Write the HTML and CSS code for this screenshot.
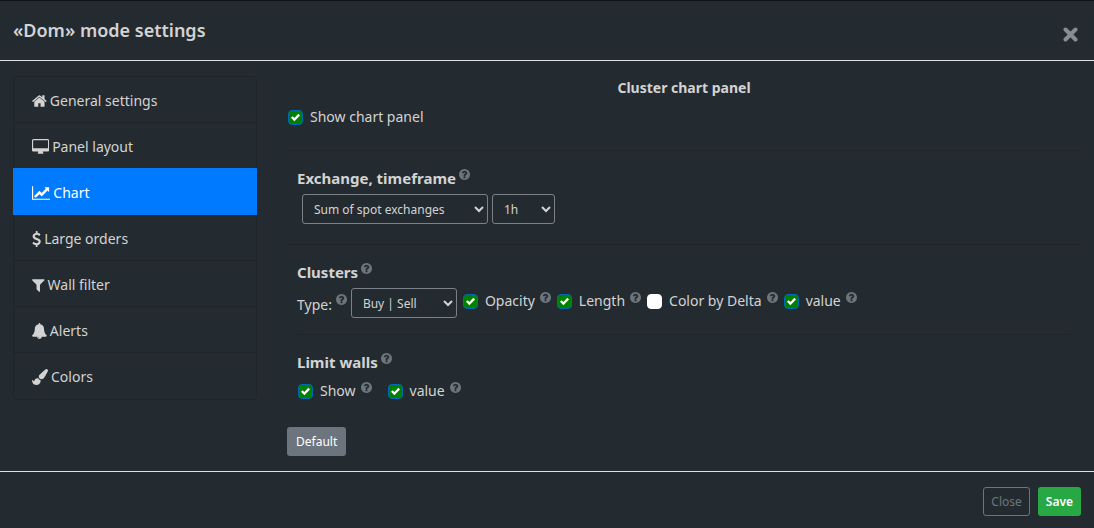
FILE: index.html
```html
<!DOCTYPE html>
<html lang="en">
  <head>
    <meta charset="UTF-8" />
    <meta name="viewport" content="width=device-width, initial-scale=1.0" />
    <title>«Dom» mode settings</title>
    <link rel="stylesheet" href="styles.css">
  </head>
  <body>
    <svg class="sprite" aria-hidden="true">
      <symbol id="icon-help" viewBox="128 128 1536 1536">
        <path d="M1024 1376v-192q0-14-9-23t-23-9h-192q-14 0-23 9t-9 23v192q0 14 9 23t23 9h192q14 0 23-9t9-23zm256-672q0-88-55.500-163t-138.500-116-170-41q-243 0-371 213-15 24 8 42l132 100q7 6 19 6 16 0 25-12 53-68 86-92 34-24 86-24 48 0 85.500 26t37.500 59q0 38-20 61t-68 45q-63 28-115.500 86.500t-52.500 125.500v36q0 14 9 23t23 9h192q14 0 23-9t9-23q0-19 21.500-49.500t54.500-49.500q32-18 49-28.500t46-35 44.500-48 28-60.500 12.500-81zm384 192q0 209-103 385.500t-279.500 279.500-385.500 103-385.500-103-279.500-279.500-103-385.500 103-385.500 279.500-279.500 385.500-103 385.500 103 279.500 279.500 103 385.500z"/>
      </symbol>
    </svg>

    <div class="modal">
      <header class="modal-header">
        <h1>«Dom» mode settings</h1>
        <button type="button" class="close-btn" aria-label="Close dialog">
          <svg viewBox="0 0 15 15"><path d="M2.500 2.500l10 10M12.500 2.500l-10 10"/></svg>
        </button>
      </header>

      <div class="modal-body">
        <nav class="menu">
          <a href="#general">
            <svg viewBox="64 0 1664 1792"><path d="M1472 992v480q0 26-19 45t-45 19h-384v-384h-256v384h-384q-26 0-45-19t-19-45v-480q0-1 .5-3t.5-3l575-474 575 474q1 2 1 6zm223-69l-62 74q-8 9-21 11h-3q-13 0-21-7l-692-577-692 577q-12 8-24 7-13-2-21-11l-62-74q-8-10-7-23.500t11-21.500l719-599q32-26 76-26t76 26l244 204v-195q0-14 9-23t23-9h192q14 0 23 9t9 23v408l219 182q10 8 11 21.500t-7 23.500z"/></svg>
            General settings
          </a>
          <a href="#layout">
            <svg viewBox="-64 0 1920 1792"><path d="M1728 992v-832q0-13-9.500-22.500t-22.500-9.500h-1600q-13 0-22.500 9.500t-9.500 22.500v832q0 13 9.500 22.500t22.500 9.500h1600q13 0 22.500-9.500t9.500-22.500zm128-832v1088q0 66-47 113t-113 47h-544q0 37 16 77.500t32 71 16 43.500q0 26-19 45t-45 19h-512q-26 0-45-19t-19-45q0-14 16-44t32-70 16-78h-544q-66 0-113-47t-47-113v-1088q0-66 47-113t113-47h1600q66 0 113 47t47 113z"/></svg>
            Panel layout
          </a>
          <a href="#chart" class="active">
            <svg viewBox="-128 0 2048 1792"><path d="M1920 1536v128h-2048v-1536h128v1408h1920zm-128-1248v435q0 21-19.500 29.500t-35.500-7.500l-121-121-633 633q-10 10-23 10t-23-10l-233-233-416 416-192-192 585-585q10-10 23-10t23 10l233 233 464-464-121-121q-16-16-7.500-35.500t29.500-19.500h435q14 0 23 9t9 23z"/></svg>
            Chart
          </a>
          <a href="#orders">
            <svg viewBox="384 0 1024 1792"><path d="M1362 1185q0 153-99.500 263.500t-258.500 136.500v175q0 14-9 23t-23 9h-135q-13 0-22.500-9.500t-9.500-22.500v-175q-66-9-127.500-31t-101.500-44.500-74-48-46.500-37.500-17.500-18q-17-21-2-41l103-135q7-10 23-12 15-2 24 9l2 2q113 99 243 125 37 8 74 8 81 0 142.500-43t61.500-122q0-28-15-53t-33.500-42-58.500-37.500-66-32-80-32.500q-39-16-61.500-25t-61.500-26.500-62.500-31-56.500-35.500-53.500-42.500-43.500-49-35.500-58-21-66.500-8.500-78q0-138 98-242t255-134v-180q0-13 9.500-22.500t22.500-9.500h135q14 0 23 9t9 23v176q57 6 110.500 23t87 33.500 63.500 37.500 39 29 15 14q17 18 5 38l-81 146q-8 15-23 16-14 3-27-7-3-3-14.500-12t-39-26.500-58.500-32-74.500-26-85.500-11.500q-95 0-155 43t-60 111q0 26 8.500 48t29.500 41.500 39.500 33 56 31 60.500 27 70 27.500q53 20 81 31.500t76 35 75.500 42.500 62 50 53 63.500 31.500 76.500 13 94z"/></svg>
            Large orders
          </a>
          <a href="#filter">
            <svg viewBox="192 0 1408 1792"><path d="M1595 295q17 41-14 70l-493 493v742q0 42-39 59-13 5-25 5-27 0-45-19l-256-256q-19-19-19-45v-486l-493-493q-31-29-14-70 17-39 59-39h1280q42 0 59 39z"/></svg>
            Wall filter
          </a>
          <a href="#alerts">
            <svg viewBox="64 0 1664 1792"><path d="M912 1696q0-16-16-16-59 0-101.500-42.500t-42.500-101.500q0-16-16-16t-16 16q0 73 51.500 124.500t124.500 51.500q16 0 16-16zm816-288q0 52-38 90t-90 38h-448q0 106-75 181t-181 75-181-75-75-181h-448q-52 0-90-38t-38-90q50-42 91-88t85-119.500 74.500-158.500 50-206 19.500-260q0-152 117-282.500t307-158.500q-8-19-8-39 0-40 28-68t68-28 68 28 28 68q0 20-8 39 190 28 307 158.500t117 282.500q0 139 19.500 260t50 206 74.500 158.500 85 119.500 91 88z"/></svg>
            Alerts
          </a>
          <a href="#colors">
            <svg viewBox="0 0 1792 1792"><path d="M1615 0q70 0 122.500 46.500t52.500 116.500q0 63-45 151-332 629-465 752-97 91-218 91-126 0-216.500-92.500t-90.500-219.500q0-128 92-212l638-579q59-54 130-54zm-909 1034q39 76 106.500 130t150.500 76l1 71q4 213-129.500 347t-348.500 134q-123 0-218-46.500t-152.500-127.500-86.500-183-29-220q7 5 41 30t62 44.500 59 36.500 46 17q41 0 55-37 25-66 57.500-112.500t69.500-76 88-47.500 103-25.500 125-10.500z"/></svg>
            Colors
          </a>
        </nav>

        <form class="content" id="settings-form">
          <h2 class="content-title">Cluster chart panel</h2>
          <div class="check">
            <input type="checkbox" id="show-panel" checked />
            <label for="show-panel">Show chart panel</label>
          </div>

          <section class="group">
            <h2>Exchange, timeframe <svg class="help"><use href="#icon-help"/></svg></h2>
            <div class="selects">
              <select class="select-exchange" aria-label="Exchange">
                <option>Sum of spot exchanges</option>
              </select>
              <select class="select-time" aria-label="Timeframe">
                <option>1h</option>
              </select>
            </div>
          </section>

          <section class="group">
            <h2>Clusters <svg class="help"><use href="#icon-help"/></svg></h2>
            <div class="clusters">
              <div class="type">
                <label for="cluster-type">Type:</label>
                <svg class="help"><use href="#icon-help"/></svg>
                <select class="select-type" id="cluster-type">
                  <option>Buy | Sell</option>
                </select>
              </div>
              <div class="check">
                <input type="checkbox" id="opacity" checked />
                <label for="opacity">Opacity</label>
                <svg class="help"><use href="#icon-help"/></svg>
              </div>
              <div class="check">
                <input type="checkbox" id="length" checked />
                <label for="length">Length</label>
                <svg class="help"><use href="#icon-help"/></svg>
              </div>
              <div class="check">
                <input type="checkbox" id="delta" />
                <label for="delta">Color by Delta</label>
                <svg class="help"><use href="#icon-help"/></svg>
              </div>
              <div class="check">
                <input type="checkbox" id="cluster-value" checked />
                <label for="cluster-value">value</label>
                <svg class="help"><use href="#icon-help"/></svg>
              </div>
            </div>
          </section>

          <section class="group group-inner">
            <h2>Limit walls <svg class="help"><use href="#icon-help"/></svg></h2>
            <div class="walls">
              <div class="check">
                <input type="checkbox" id="wall-show" checked />
                <label for="wall-show">Show</label>
                <svg class="help"><use href="#icon-help"/></svg>
              </div>
              <div class="check">
                <input type="checkbox" id="wall-value" checked />
                <label for="wall-value">value</label>
                <svg class="help"><use href="#icon-help"/></svg>
              </div>
            </div>
          </section>

          <button type="reset" class="btn btn-default">Default</button>
        </form>
      </div>

      <footer class="modal-footer">
        <button type="button" class="btn btn-close">Close</button>
        <button type="submit" form="settings-form" class="btn btn-save">Save</button>
      </footer>
    </div>
  </body>
</html>
```
FILE: styles.css
```css
* {
  margin: 0;
  padding: 0;
  box-sizing: border-box;
}

body {
  font-family: "Noto Sans", "Open Sans", sans-serif;
  font-size: 14px;
  line-height: 24px;
  color: #d3d3d3;
  background-color: #242b30;
}

.sprite {
  display: none;
}

.modal {
  border-top: 1px solid #0d1218;
}

.modal-header {
  display: flex;
  justify-content: space-between;
  align-items: center;
  padding: 14px 16px 15px 13px;
  border-bottom: 1px solid #dee2e6;
}

h1 {
  font-size: 18px;
  font-weight: 600;
  line-height: 30px;
}

.close-btn {
  margin-top: 8px;
  border: none;
  background: none;
  cursor: pointer;
}

.close-btn svg {
  display: block;
  width: 15px;
  height: 15px;
  stroke: #8a8d90;
  stroke-width: 4;
  stroke-linecap: round;
}

.modal-body {
  display: flex;
  gap: 30px;
  align-items: flex-start;
  padding: 15px 13px;
}

.menu {
  flex: none;
  width: 244px;
  border: 1px solid #1f242a;
  border-radius: 4px;
}

.menu a {
  display: flex;
  align-items: center;
  gap: 3px;
  height: 46px;
  padding: 2px 18px 0;
  color: inherit;
  text-decoration: none;
  border-bottom: 1px solid #1f242a;
}

.menu a:last-child {
  border-bottom: none;
}

.menu a.active {
  margin: -1px -1px 0;
  height: 47px;
  padding: 3px 19px 0;
  color: white;
  background-color: #007bff;
  border-color: #007bff;
}

.menu svg {
  height: 16px;
  fill: currentColor;
}

.content {
  flex: 1;
}

h2 {
  font-size: 15px;
  font-weight: 700;
  line-height: 24px;
}

.content-title {
  margin-bottom: 5px;
  font-size: 14px;
  text-align: center;
}

.help {
  width: 11px;
  height: 11px;
  fill: #6c757d;
  vertical-align: 4px;
}

h2 .help {
  margin-left: -1px;
}

.check {
  display: flex;
  align-items: center;
  height: 24px;
}

.check label {
  margin-left: 7px;
}

.check .help {
  margin: 0 0 7px 5px;
}

input[type="checkbox"] {
  appearance: none;
  width: 15px;
  height: 15px;
  border: 1px solid white;
  border-radius: 4px;
  background: white center / 9px no-repeat;
}

input[type="checkbox"]:checked {
  border-color: #0069b4;
  background-color: #008000;
  background-image: url("data:image/svg+xml,%3Csvg xmlns='http://www.w3.org/2000/svg' viewBox='0 0 8 8'%3E%3Cpath fill='%23fff' d='M6.564.75l-3.590 3.612-1.538-1.550L0 4.260l2.974 2.990L8 2.193z'/%3E%3C/svg%3E");
}

.content > .check {
  margin-bottom: 21px;
  margin-left: 1px;
}

.group {
  margin-left: 1px;
  margin-bottom: 20px;
  padding: 15px 9px 0;
  border-top: 1px solid #1f242a;
}

.group:has(+ .group-inner) {
  margin-bottom: 16px;
}

.group-inner {
  margin: 0 10px 24px;
  padding: 15px 0 0;
}

.selects {
  display: flex;
  gap: 4px;
  margin: 4px 0 0 5px;
}

select {
  height: 30px;
  padding-left: 7px;
  font: inherit;
  font-size: 12px;
  color: #d3d3d3;
  background-color: #242b30;
  border: 1px solid #7b8188;
  border-radius: 3px;
}

.select-exchange {
  width: 186px;
}

.select-time {
  width: 63px;
}

.select-type {
  width: 106px;
}

.clusters {
  display: flex;
  flex-wrap: wrap;
  gap: 6px;
  margin-top: 4px;
}

.type {
  display: flex;
  align-items: center;
  gap: 4px;
}

.type label {
  padding-top: 3px;
}

.type .help {
  margin-bottom: 7px;
}

.clusters .check {
  margin-top: 1px;
}

.walls {
  display: flex;
  gap: 16px;
  margin: 5px 0 0 1px;
}

.btn {
  height: 29px;
  padding: 0 7px;
  font: inherit;
  font-size: 12px;
  border: 1px solid transparent;
  border-radius: 3px;
  cursor: pointer;
}

.btn-default {
  display: block;
  padding: 0 8px;
  color: white;
  background-color: #6c757d;
}

.modal-footer {
  display: flex;
  justify-content: flex-end;
  gap: 8px;
  padding: 15px 13px 12px;
  border-top: 1px solid #dee2e6;
}

.btn-close {
  color: #6c757d;
  background: none;
  border-color: #6c757d;
}

.btn-save {
  color: white;
  font-weight: 600;
  background-color: #28a745;
}
```
